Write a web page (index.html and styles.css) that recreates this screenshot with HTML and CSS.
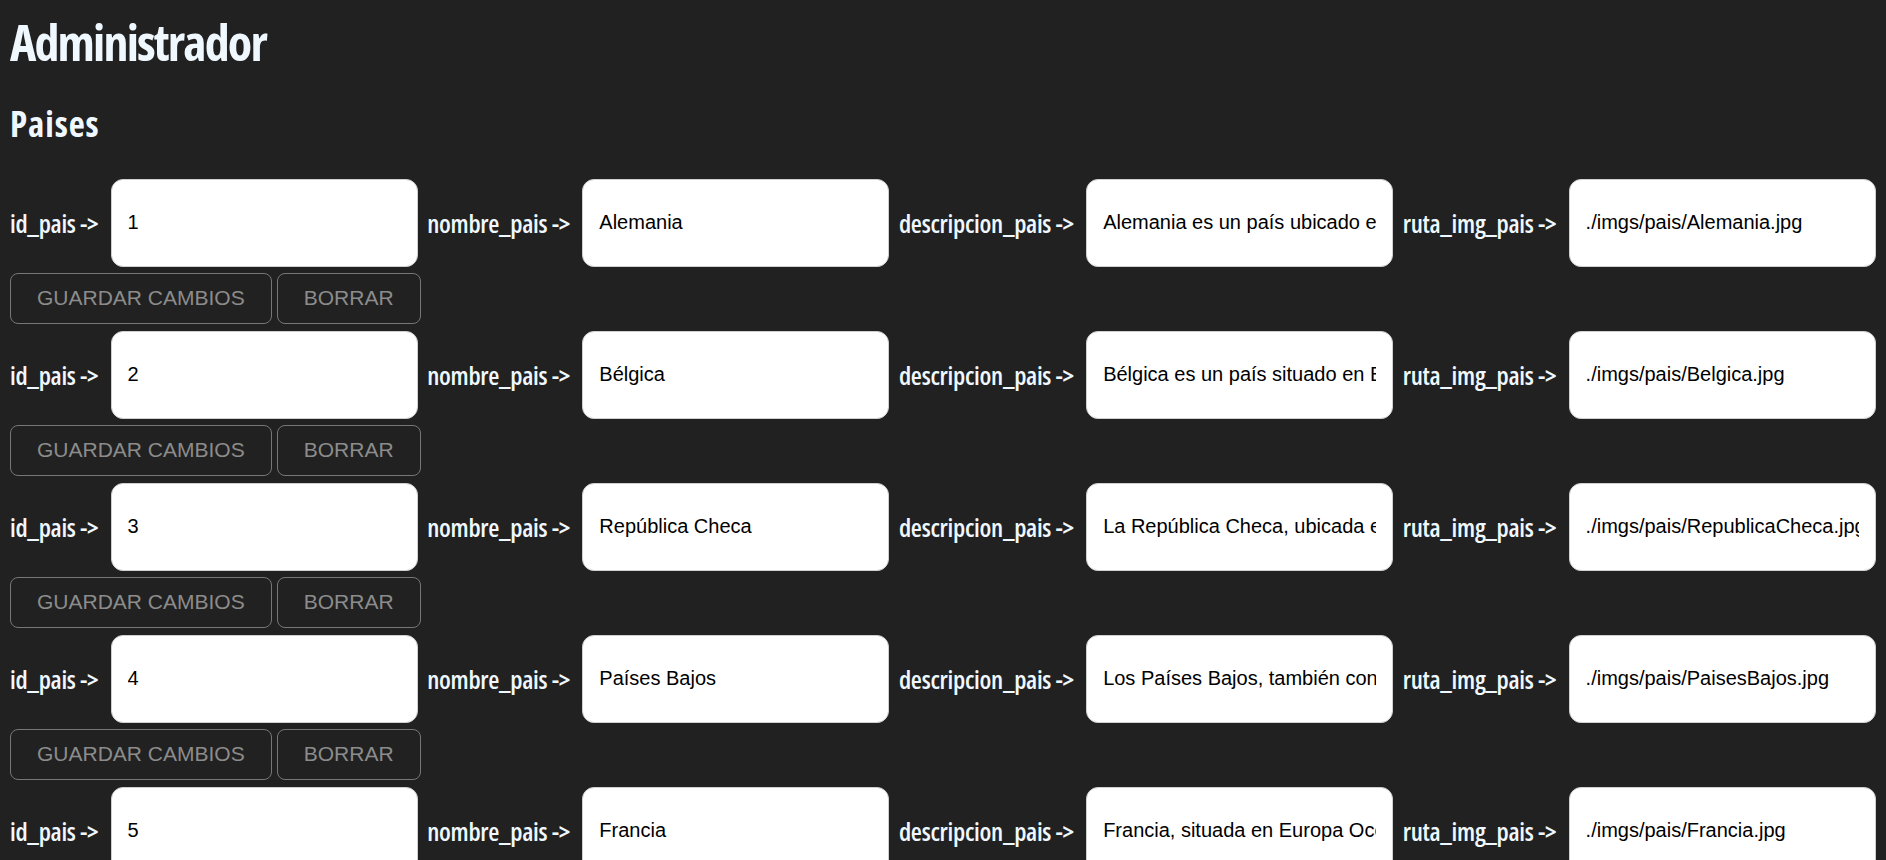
FILE: index.html
```html
<!DOCTYPE html>
<html lang="es">
<head>
<meta charset="utf-8">
<title>Administrador</title>
<link rel="stylesheet" href="styles.css">
</head>
<body>
<h1 class="titulo">Administrador</h1>
<h2 class="subtitulo">Paises</h2>
<div class="lista">
  <div class="registro">
    <div class="campos">
      <label class="etiqueta">id_pais -&gt;</label><input class="campo" type="text" value="1">
      <label class="etiqueta">nombre_pais -&gt;</label><input class="campo" type="text" value="Alemania">
      <label class="etiqueta">descripcion_pais -&gt;</label><input class="campo" type="text" value="Alemania es un país ubicado en Europa Central, conocido por su historia y cultura.">
      <label class="etiqueta">ruta_img_pais -&gt;</label><input class="campo" type="text" value="./imgs/pais/Alemania.jpg">
    </div>
    <div class="acciones"><button class="boton">GUARDAR CAMBIOS</button><button class="boton">BORRAR</button></div>
  </div>
  <div class="registro">
    <div class="campos">
      <label class="etiqueta">id_pais -&gt;</label><input class="campo" type="text" value="2">
      <label class="etiqueta">nombre_pais -&gt;</label><input class="campo" type="text" value="Bélgica">
      <label class="etiqueta">descripcion_pais -&gt;</label><input class="campo" type="text" value="Bélgica es un país situado en Europa Occidental, famoso por su chocolate.">
      <label class="etiqueta">ruta_img_pais -&gt;</label><input class="campo" type="text" value="./imgs/pais/Belgica.jpg">
    </div>
    <div class="acciones"><button class="boton">GUARDAR CAMBIOS</button><button class="boton">BORRAR</button></div>
  </div>
  <div class="registro">
    <div class="campos">
      <label class="etiqueta">id_pais -&gt;</label><input class="campo" type="text" value="3">
      <label class="etiqueta">nombre_pais -&gt;</label><input class="campo" type="text" value="República Checa">
      <label class="etiqueta">descripcion_pais -&gt;</label><input class="campo" type="text" value="La República Checa, ubicada en el corazón de Europa, es famosa por Praga.">
      <label class="etiqueta">ruta_img_pais -&gt;</label><input class="campo" type="text" value="./imgs/pais/RepublicaCheca.jpg">
    </div>
    <div class="acciones"><button class="boton">GUARDAR CAMBIOS</button><button class="boton">BORRAR</button></div>
  </div>
  <div class="registro">
    <div class="campos">
      <label class="etiqueta">id_pais -&gt;</label><input class="campo" type="text" value="4">
      <label class="etiqueta">nombre_pais -&gt;</label><input class="campo" type="text" value="Países Bajos">
      <label class="etiqueta">descripcion_pais -&gt;</label><input class="campo" type="text" value="Los Países Bajos, también conocidos como Holanda, son famosos por sus canales.">
      <label class="etiqueta">ruta_img_pais -&gt;</label><input class="campo" type="text" value="./imgs/pais/PaisesBajos.jpg">
    </div>
    <div class="acciones"><button class="boton">GUARDAR CAMBIOS</button><button class="boton">BORRAR</button></div>
  </div>
  <div class="registro">
    <div class="campos">
      <label class="etiqueta">id_pais -&gt;</label><input class="campo" type="text" value="5">
      <label class="etiqueta">nombre_pais -&gt;</label><input class="campo" type="text" value="Francia">
      <label class="etiqueta">descripcion_pais -&gt;</label><input class="campo" type="text" value="Francia, situada en Europa Occidental, es conocida por su arte y gastronomía.">
      <label class="etiqueta">ruta_img_pais -&gt;</label><input class="campo" type="text" value="./imgs/pais/Francia.jpg">
    </div>
    <div class="acciones"><button class="boton">GUARDAR CAMBIOS</button><button class="boton">BORRAR</button></div>
  </div>
</div>
</body>
</html>
```
FILE: styles.css
```css
html, body {
  margin: 0;
  padding: 0;
  background: #212121;
}
body {
  padding: 0 10px;
  color: #f0f8ff;
  font-family: "Open Sans", "Liberation Sans", sans-serif;
  font-stretch: 75%;
  overflow: hidden;
}
.titulo {
  margin: 16.5px 0 0;
  font-size: 50px;
  line-height: 50px;
  font-weight: 700;
  letter-spacing: -1.85px;
}
.subtitulo {
  margin: 39.4px 0 0;
  font-size: 35px;
  line-height: 35px;
  font-weight: 700;
  letter-spacing: 0.9px;
}
.lista {
  margin-top: 38px;
}
.campos {
  display: flex;
  align-items: center;
  height: 88px;
}
.etiqueta {
  flex: none;
  font-size: 25.5px;
  font-weight: 600;
  letter-spacing: -0.3px;
  margin-right: 12.4px;
  white-space: nowrap;
}
.campo {
  flex: none;
  box-sizing: border-box;
  width: 307px;
  height: 88px;
  margin: 0 9.6px 0 0;
  padding: 0 16px;
  border: 1px solid #d0d0d0;
  border-radius: 12px;
  background: #fff;
  color: #000;
  font-family: "Liberation Sans", Arial, sans-serif;
  font-stretch: normal;
  font-size: 20px;
  outline: none;
}
.acciones {
  display: flex;
  gap: 5px;
  margin: 6px 0 7px;
}
.boton {
  box-sizing: border-box;
  height: 51px;
  padding: 0 26px;
  border: 1px solid #777;
  border-radius: 8px;
  background: transparent;
  color: #8c8c8c;
  font-family: "Liberation Sans", Arial, sans-serif;
  font-stretch: normal;
  font-size: 21px;
}
```
